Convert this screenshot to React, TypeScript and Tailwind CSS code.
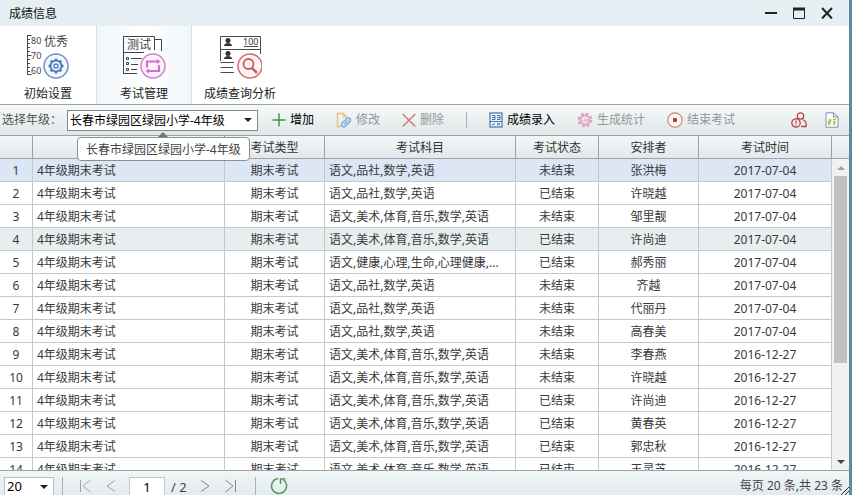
import type { ReactNode } from "react";

type Exam = {
  name: string;
  type: string;
  subjects: string;
  status: string;
  teacher: string;
  date: string;
};

const SHORT = "语文,品社,数学,英语";
const LONG = "语文,美术,体育,音乐,数学,英语";

const exam = (subjects: string, status: string, teacher: string, date: string): Exam => ({
  name: "4年级期末考试",
  type: "期末考试",
  subjects,
  status,
  teacher,
  date,
});

const exams: Exam[] = [
  exam(SHORT, "未结束", "张洪梅", "2017-07-04"),
  exam(SHORT, "已结束", "许晓越", "2017-07-04"),
  exam(LONG, "未结束", "邹里靓", "2017-07-04"),
  exam(LONG, "已结束", "许尚迪", "2017-07-04"),
  exam("语文,健康,心理,生命,心理健康,...", "已结束", "郝秀丽", "2017-07-04"),
  exam(SHORT, "未结束", "齐越", "2017-07-04"),
  exam(SHORT, "未结束", "代丽丹", "2017-07-04"),
  exam(SHORT, "未结束", "高春美", "2017-07-04"),
  exam(LONG, "未结束", "李春燕", "2016-12-27"),
  exam(LONG, "未结束", "许晓越", "2016-12-27"),
  exam(LONG, "已结束", "许尚迪", "2016-12-27"),
  exam(LONG, "已结束", "黄春英", "2016-12-27"),
  exam(LONG, "已结束", "郭忠秋", "2016-12-27"),
  exam(LONG, "已结束", "王灵芝", "2016-12-27"),
];

const SELECTED = 0;
const HOVERED = 3;

function rowColor(index: number) {
  if (index === SELECTED) return "bg-[#dce6f5]";
  if (index === HOVERED) return "bg-[#e8eeef]";
  return "bg-white";
}

function SetupIcon() {
  return (
    <svg width="44" height="46" viewBox="0 0 44 46" fill="none" aria-hidden="true">
      <path
        d="M1.5 1v40M1.5 1.5h4M1.5 5.5h2.5M1.5 9.5h2.5M1.5 13.5h2.5M1.5 17.5h2.5M1.5 21.5h4M1.5 25.5h2.5M1.5 29.5h2.5M1.5 33.5h2.5M1.5 37.5h2.5M1.5 40.5h4"
        stroke="#4a4a4a"
      />
      <g fill="#444" fontSize="9">
        <text x="5" y="10">80</text>
        <text x="5" y="25">70</text>
        <text x="5" y="40">60</text>
        <text x="18" y="12" fontSize="12">优秀</text>
      </g>
      <circle cx="30" cy="32" r="12" fill="#f4f8fd" stroke="#7390c0" strokeWidth="1.5" />
      <circle cx="30" cy="32" r="5.5" stroke="#4c7fc0" strokeWidth="2" />
      <circle cx="30" cy="32" r="2" stroke="#4c7fc0" strokeWidth="1.5" />
      <path
        d="M30 24.5v1.5M30 38v1.500M22.500 32h1.500M36 32h1.500M24.700 26.700l1.200 1.200M34.100 36.100l1.200 1.200M35.300 26.700l-1.200 1.200M25.900 36.100l-1.200 1.200"
        stroke="#4c7fc0"
        strokeWidth="2.500"
      />
    </svg>
  );
}

function ManageIcon() {
  return (
    <svg width="44" height="46" viewBox="0 0 44 46" fill="none" aria-hidden="true">
      <path
        d="M1.500 40V2.500H32.500V16M32.500 5.500h7V17M1.500 18.500H22M1.500 39.500H15M9 24.500h11M9 30.500h7M9 35.500h6"
        stroke="#444"
      />
      <path d="M4.500 23.500h2v2h-2zM4.500 28.500h2v2h-2zM4.500 34.500h2v2h-2z" stroke="#444" />
      <text x="5" y="15" fill="#444" fontSize="12">测试</text>
      <circle cx="31" cy="32" r="12" fill="#fdf1fc" stroke="#cc84cc" strokeWidth="1.500" />
      <path d="M25 33.500V27.500H35M27 37H37V31" stroke="#cf6fce" strokeWidth="2.200" />
      <path d="M35 25l3.500 2.500-3.500 2.500zM27 34.500L23.500 37l3.500 2.500z" fill="#cf6fce" />
    </svg>
  );
}

function AnalysisIcon() {
  return (
    <svg width="44" height="46" viewBox="0 0 44 46" fill="none" aria-hidden="true">
      <path
        d="M2.500 27V2.500H42.500V20M2.500 15.500H42.500M2.500 28.500H16M2.500 33.500H15M2.500 38.500H16"
        stroke="#4a4a4a"
      />
      <path d="M26 12.500h14" stroke="#4a4a4a" />
      <g fill="#333">
        <circle cx="10" cy="6.500" r="2.500" />
        <path d="M6 12c0-2 2-3 4-3s4 1 4 3z" />
        <circle cx="10" cy="19.500" r="2.500" />
        <path d="M6 25c0-2 2-3 4-3s4 1 4 3z" />
        <text x="25" y="11" fontSize="9">100</text>
      </g>
      <circle cx="32" cy="32" r="12" fill="#fdf4f3" stroke="#cf706c" strokeWidth="1.500" />
      <circle cx="30.500" cy="30" r="5" stroke="#cf5d58" strokeWidth="1.800" />
      <path d="M34 34l5 5" stroke="#cf5d58" strokeWidth="2.500" />
    </svg>
  );
}

function AddIcon() {
  return (
    <svg width="14" height="16" viewBox="0 0 14 16" aria-hidden="true">
      <path d="M7 1.500v13M.5 8h13" stroke="#3f9a45" strokeWidth="1.500" />
    </svg>
  );
}

function EditIcon() {
  return (
    <svg width="16" height="16" viewBox="0 0 16 16" fill="none" aria-hidden="true">
      <path d="M5 14.500H1.500V1.500H7L11 5" stroke="#ecc07a" strokeWidth="1.500" />
      <path d="M7 1.500V5h4" stroke="#ecc07a" />
      <path
        d="M6 11l5-4.500c2-1.500 4.500.8 3 3L9 14.500C7 16 4.500 13 6 11zM8 12.500l4-4"
        stroke="#74aedb"
        strokeWidth="1.500"
      />
    </svg>
  );
}

function DeleteIcon() {
  return (
    <svg width="14" height="16" viewBox="0 0 14 16" aria-hidden="true">
      <path d="M.7 2l12.600 12.500M13.300 2L.7 14.500" stroke="#d0787a" strokeWidth="1.400" />
    </svg>
  );
}

function EntryIcon() {
  return (
    <svg width="14" height="16" viewBox="0 0 14 16" fill="none" aria-hidden="true">
      <rect x="1" y="1" width="12" height="14" fill="#f2f7fc" stroke="#4674b0" strokeWidth="1.200" />
      <path
        d="M3 3.500h3v4H3M3 5.500h3M8 3.500h3v4H8M8 5.500h3M1 9.500h12M3 12l1 1.200L6 11M8 11l3 2.500M11 11l-3 2.500"
        stroke="#4674b0"
      />
    </svg>
  );
}

function StatsIcon() {
  return (
    <svg width="16" height="16" viewBox="0 0 16 16" fill="none" stroke="#e3a3c6" aria-hidden="true">
      <circle cx="8" cy="8" r="6" strokeWidth="3" strokeDasharray="2.700 2.012" />
      <circle cx="8" cy="8" r="4.500" strokeWidth="1.800" />
      <path d="M6 10V8M8 10V6M10 10V7" />
    </svg>
  );
}

function FinishIcon() {
  return (
    <svg width="16" height="16" viewBox="0 0 16 16" fill="none" aria-hidden="true">
      <circle cx="8" cy="8" r="7.200" fill="#fdf5f1" stroke="#c9877c" strokeWidth="1.200" />
      <rect x="6" y="6" width="4" height="4" rx="1" fill="#a5452f" />
    </svg>
  );
}

function UserAlertIcon() {
  return (
    <svg width="16" height="16" viewBox="0 0 16 16" fill="none" stroke="#bd4340" strokeWidth="1.300" aria-hidden="true">
      <circle cx="9.500" cy="4" r="3.200" />
      <path d="M10 14.500h5c.8-3.500-1-6-3.500-7" />
      <circle cx="5" cy="11" r="4.200" />
      <path d="M5 8.500v3M5 12.500v1" />
    </svg>
  );
}

function ExportIcon() {
  return (
    <svg width="14" height="16" viewBox="0 0 14 16" fill="none" aria-hidden="true">
      <path d="M1 .8h7.500L13 5v10.200H1z" fill="#fbfcfa" stroke="#7f8fb8" />
      <path d="M8.500 1v4H13" stroke="#7f8fb8" />
      <path d="M3.500 8h2v2h-2v2h2M8 7.500h2.500M8 10h2.500M8 12h2.500" stroke="#a9bd3e" strokeWidth="1.400" />
    </svg>
  );
}

function Caret() {
  return (
    <svg
      className="pointer-events-none absolute top-1/2 right-1.5 -translate-y-1/2"
      width="8"
      height="4"
      viewBox="0 0 8 4"
      aria-hidden="true"
    >
      <path d="M0 0h8L4 4z" fill="#222" />
    </svg>
  );
}

function Tab({ icon, label, active }: { icon: ReactNode; label: string; active?: boolean }) {
  return (
    <button
      type="button"
      className={
        active
          ? "flex w-24 flex-col items-center border-x border-[#d5e2ea] bg-gradient-to-r from-[#eff6fa] via-white to-[#eff6fa] pt-2"
          : "flex w-24 flex-col items-center pt-2"
      }
    >
      {icon}
      <span className="mt-1.5 whitespace-nowrap text-[#222]">{label}</span>
    </button>
  );
}

function Action({ icon, label, disabled }: { icon: ReactNode; label: string; disabled?: boolean }) {
  return (
    <button
      type="button"
      disabled={disabled}
      className="flex items-center gap-1 whitespace-nowrap text-black disabled:text-[#929799]"
    >
      {icon}
      {label}
    </button>
  );
}

function PageButton({ label, path }: { label: string; path: string }) {
  return (
    <button type="button" aria-label={label} className="p-0.5">
      <svg width="12" height="14" viewBox="0 0 12 14" fill="none" stroke="currentColor" aria-hidden="true">
        <path d={path} />
      </svg>
    </button>
  );
}

function TitleBar() {
  return (
    <header className="flex h-[26px] shrink-0 items-center bg-[#e5eff3] pr-4 pl-[9px]">
      <h1 className="flex-1 pt-0.5 text-[#111]">成绩信息</h1>
      <div className="flex gap-4">
        <button type="button" aria-label="最小化">
          <svg width="12" height="12" viewBox="0 0 12 12" aria-hidden="true">
            <path d="M0 6h12" stroke="#222" strokeWidth="2" />
          </svg>
        </button>
        <button type="button" aria-label="最大化">
          <svg width="12" height="12" viewBox="0 0 12 12" fill="none" stroke="#222" aria-hidden="true">
            <path d="M.5 1v10.500h11V1" />
            <path d="M0 2h12" strokeWidth="3" />
          </svg>
        </button>
        <button type="button" aria-label="关闭">
          <svg width="12" height="12" viewBox="0 0 12 12" aria-hidden="true">
            <path d="M1 1l10 10.500M11 1L1 11.500" stroke="#222" strokeWidth="2" />
          </svg>
        </button>
      </div>
    </header>
  );
}

function FilterBar() {
  return (
    <div className="flex h-8 shrink-0 items-center border-y border-[#9ba3a6] bg-gradient-to-b from-[#f5f9f9] to-[#e1e7e9]">
      <label htmlFor="grade" className="w-[67px] shrink-0 pl-0.5 text-[#555]">
        选择年级：
      </label>
      <div className="relative w-[191px] shrink-0">
        <select
          id="grade"
          className="block h-[21px] w-full appearance-none border border-[#81898c] bg-white pt-0.5 pl-0.5 text-black"
        >
          <option>长春市绿园区绿园小学-4年级</option>
        </select>
        <Caret />
        <div
          role="tooltip"
          className="absolute top-[27px] left-2.5 z-10 rounded border border-[#8b9092] bg-white px-2 pt-1 pb-0.5 whitespace-nowrap text-[#444]"
        >
          长春市绿园区绿园小学-4年级
          <svg
            className="absolute -top-1.5 left-1/2 -translate-x-1/2"
            width="10"
            height="5"
            viewBox="0 0 10 5"
            aria-hidden="true"
          >
            <path d="M0 5l5-5 5 5z" fill="#777" />
          </svg>
        </div>
      </div>
      <div className="flex items-center gap-[22px] pl-3.5">
        <Action icon={<AddIcon />} label="增加" />
        <Action icon={<EditIcon />} label="修改" disabled />
        <Action icon={<DeleteIcon />} label="删除" disabled />
        <span className="h-4 w-px bg-[#a9b0b2]" />
        <Action icon={<EntryIcon />} label="成绩录入" />
        <Action icon={<StatsIcon />} label="生成统计" disabled />
        <Action icon={<FinishIcon />} label="结束考试" disabled />
      </div>
      <div className="ml-auto flex items-center gap-[18px] pr-2.5">
        <button type="button" aria-label="人员提醒">
          <UserAlertIcon />
        </button>
        <button type="button" aria-label="导出">
          <ExportIcon />
        </button>
      </div>
    </div>
  );
}

const headCell = "h-[23px] border-r border-b border-[#9ba3a6] p-0 pt-0.5 font-normal text-[#333]";
const bodyCell = "h-[23px] border-r border-b border-[#c3c8ca] p-0 pt-0.5 text-center";
const textCell =
  "h-[23px] overflow-hidden border-r border-b border-[#c3c8ca] p-0 pt-0.5 pl-1 text-ellipsis whitespace-nowrap";

function ExamTable() {
  return (
    <table className="w-full table-fixed border-separate border-spacing-0">
      <colgroup>
        <col className="w-[33px]" />
        <col />
        <col className="w-[100px]" />
        <col className="w-[191px]" />
        <col className="w-[83px]" />
        <col className="w-[100px]" />
        <col className="w-[133px]" />
      </colgroup>
      <thead className="bg-gradient-to-b from-[#f3f7f7] to-[#e2e8ea]">
        <tr>
          <th className={headCell} aria-label="序号" />
          <th className={headCell} aria-label="考试名称" />
          <th className={headCell}>考试类型</th>
          <th className={headCell}>考试科目</th>
          <th className={headCell}>考试状态</th>
          <th className={headCell}>安排者</th>
          <th className={headCell}>考试时间</th>
        </tr>
      </thead>
      <tbody className="text-[#3a3a3a]">
        {exams.map((row, i) => (
          <tr key={i} className={rowColor(i)}>
            <td className={bodyCell}>{i + 1}</td>
            <td className={textCell}>{row.name}</td>
            <td className={bodyCell}>{row.type}</td>
            <td className={textCell}>{row.subjects}</td>
            <td className={bodyCell}>{row.status}</td>
            <td className={bodyCell}>{row.teacher}</td>
            <td className={bodyCell}>{row.date}</td>
          </tr>
        ))}
      </tbody>
    </table>
  );
}

function ScrollTrack() {
  return (
    <div className="flex w-[17px] shrink-0 flex-col">
      <div className="h-[23px] border-b border-[#9ba3a6] bg-gradient-to-b from-[#f3f7f7] to-[#e2e8ea]" />
      <div className="flex flex-1 flex-col items-center bg-[#f1f1f1]">
        <span className="flex h-[17px] items-center">
          <svg width="8" height="4" viewBox="0 0 8 4" aria-hidden="true">
            <path d="M0 4h8L4 0z" fill="#a3a3a3" />
          </svg>
        </span>
        <span className="h-[187px] w-[13px] bg-[#c1c1c1]" />
        <span className="mt-auto flex h-[17px] items-center">
          <svg width="8" height="4" viewBox="0 0 8 4" aria-hidden="true">
            <path d="M0 0h8L4 4z" fill="#444" />
          </svg>
        </span>
      </div>
    </div>
  );
}

function Pager() {
  return (
    <footer className="relative flex h-[25px] shrink-0 items-start overflow-hidden border-t border-[#9ba3a6] bg-gradient-to-b from-[#f1f6f7] to-[#e3ebee] pt-1.5 pr-1.5 pl-1 text-[#444]">
      <div className="relative">
        <select
          aria-label="每页条数"
          className="block h-5 w-[50px] appearance-none border border-[#b9c0c3] bg-white pl-0.5 text-[13px] text-black"
        >
          <option>20</option>
        </select>
        <Caret />
      </div>
      <span className="ml-2 h-5 w-px bg-[#a9b0b2]" />
      <div className="ml-3.5 flex gap-2.5 text-[#9aa2a5]">
        <PageButton label="首页" path="M1.500 1v12M11.500 1L4 7l7.500 6" />
        <PageButton label="上一页" path="M10 1.500L2 7l8 5.500" />
      </div>
      <input
        aria-label="页码"
        defaultValue="1"
        className="ml-2.5 h-5 w-9 border border-[#c3c8ca] bg-white text-center text-[13px] text-black"
      />
      <span className="ml-1.5 text-[13px] leading-5">/ 2</span>
      <div className="ml-2.5 flex gap-2.5 text-[#7f878a]">
        <PageButton label="下一页" path="M2 1.500l8 5.500-8 5.500" />
        <PageButton label="末页" path="M.5 1L8 7 .5 13M10.500 1v12" />
      </div>
      <span className="ml-4 h-5 w-px bg-[#a9b0b2]" />
      <button type="button" aria-label="刷新" className="ml-3.5">
        <svg width="18" height="18" viewBox="0 0 18 18" fill="none" stroke="#4f9d5a" strokeWidth="1.500" aria-hidden="true">
          <path d="M8 1.600A7.500 7.500 0 1 0 13.500 3M10.500 7V2h5" />
        </svg>
      </button>
      <p className="ml-auto leading-[18px] whitespace-nowrap">每页 20 条,共 23 条</p>
      <svg className="absolute right-0 bottom-0" width="9" height="9" viewBox="0 0 9 9" aria-hidden="true">
        <path d="M1 9l8-8M5 9l4-4" stroke="#333" />
      </svg>
    </footer>
  );
}

export default function App() {
  return (
    <div className="h-screen bg-[#5b8b9f] pr-[3px] font-['Noto_Sans','Noto_Sans_CJK_SC',sans-serif] text-xs">
      <main className="flex h-full flex-col bg-white">
        <TitleBar />
        <nav className="flex h-[78px] shrink-0 bg-white">
          <Tab icon={<SetupIcon />} label="初始设置" />
          <Tab icon={<ManageIcon />} label="考试管理" active />
          <Tab icon={<AnalysisIcon />} label="成绩查询分析" />
        </nav>
        <FilterBar />
        <section className="flex min-h-0 flex-1 overflow-hidden">
          <div className="min-w-0 flex-1 overflow-hidden">
            <ExamTable />
          </div>
          <ScrollTrack />
        </section>
        <Pager />
      </main>
    </div>
  );
}
